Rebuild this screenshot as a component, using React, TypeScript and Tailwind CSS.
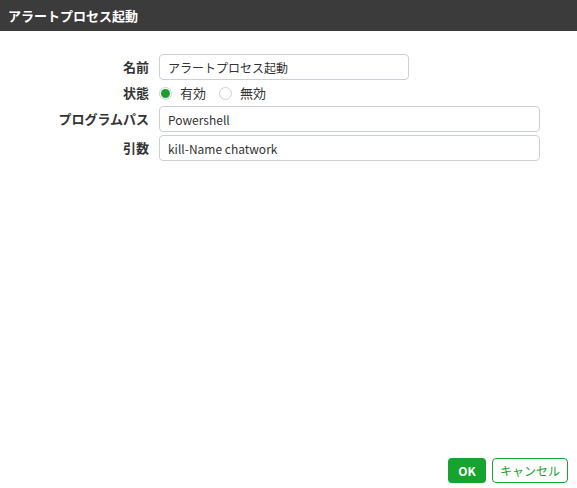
const App = () => {
  return (
    <div
      className="w-[577px] h-[488px] bg-white flex flex-col text-[#333]"
      style={{ fontFamily: '"Noto Sans CJK JP", "Noto Sans", sans-serif' }}
    >
      {/* Header */}
      <div className="h-[31px] bg-[#3b3b3b] flex items-center px-[8px]">
        <span className="text-white font-bold text-[13px]">アラートプロセス起動</span>
      </div>

      {/* Form */}
      <div className="flex-1 pt-[23px] pr-[37px]">
        <div className="grid grid-cols-[159px_1fr] gap-y-[3px] items-center text-[12px]">
          <label className="text-right pr-[10px] font-bold text-[13px]">名前</label>
          <input
            defaultValue="アラートプロセス起動"
            className="w-[250px] h-[26px] px-[8px] border border-[#ccd0d6] rounded-[4px] outline-none text-[12px] text-[#333]"
          />

          <label className="text-right pr-[10px] font-bold text-[13px]">状態</label>
          <div className="flex items-center h-[20px] text-[13px]">
            <span className="flex items-center mr-[13px]">
              <span className="w-[13px] h-[13px] rounded-full border border-[#ccd0d6] flex items-center justify-center mr-[8px]">
                <span className="w-[9px] h-[9px] rounded-full bg-[#1a9e2f]" />
              </span>
              有効
            </span>
            <span className="flex items-center">
              <span className="w-[13px] h-[13px] rounded-full border border-[#ccd0d6] mr-[8px]" />
              無効
            </span>
          </div>

          <label className="text-right pr-[10px] font-bold text-[13px]">プログラムパス</label>
          <input
            defaultValue="Powershell"
            className="w-full h-[26px] px-[8px] border border-[#ccd0d6] rounded-[4px] outline-none text-[12px] text-[#333]"
          />

          <label className="text-right pr-[10px] font-bold text-[13px]">引数</label>
          <input
            defaultValue="kill-Name chatwork"
            className="w-full h-[26px] px-[8px] border border-[#ccd0d6] rounded-[4px] outline-none text-[12px] text-[#333]"
          />
        </div>
      </div>

      {/* Footer */}
      <div className="flex justify-end gap-[6px] pr-[9px] pb-[5px]">
        <button className="w-[38px] h-[25px] rounded-[4px] bg-[#17a32e] text-white font-bold text-[12px]">
          OK
        </button>
        <button className="w-[76px] h-[25px] rounded-[4px] border border-[#17a32e] bg-white text-[#17a32e] text-[12px]">
          キャンセル
        </button>
      </div>
    </div>
  );
};

export default App;
